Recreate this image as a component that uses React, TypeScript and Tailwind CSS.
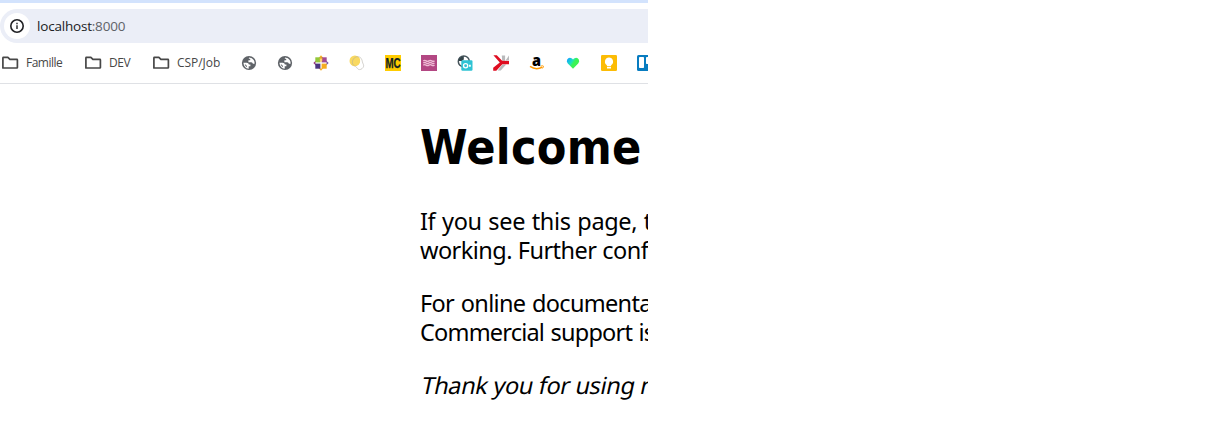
import type { ReactNode } from "react";

const Folder = () => (
  <svg className="block h-4 w-[18px] shrink-0" viewBox="0 0 18 16" fill="none" stroke="#474747" strokeWidth="1.7" strokeLinejoin="round">
    <path d="M1.9 13V2.9q0-.5.5-.5h4.5l2 2h7q.5 0 .5.5v7.6q0 .5-.5.5H2.4q-.5 0-.5-.5Z" />
  </svg>
);

const Icon = ({ children }: { children: ReactNode }) => (
  <svg className="block size-4 shrink-0" viewBox="0 0 16 16">{children}</svg>
);

const Globe = () => (
  <Icon>
    <circle cx="8" cy="8" r="7.1" fill="#5f6368" />
    <path d="M2.4 7.7h3.4q1.9.1 2.1 1.8h1.5v1.7H7.7v2.5Q3 13.3 2.4 7.7" fill="#fff" />
    <path d="M8.2 2.4q3 .1 4.5 2.5 1.1 1.7.9 3.9h-1.7q-.2-1.5-1.7-1.6H7.4V5.3h1.8V3.7H7.7Z" fill="#fff" />
    <path d="M3.7 9.3q1.3.1 2.2 1.7v1.2q-1.7-1-2.2-2.9" fill="#5f6368" />
  </Icon>
);

const Favicons = () => (
  <div className="flex shrink-0 gap-5">
    <Globe />
    <Globe />
    <Icon>
      <path d="m8 .3 2.4 2.7H5.6Z" fill="#f5ad1e" />
      <path d="M.3 8 3 5.6v4.8Z" fill="#9a3380" />
      <path d="M15.7 8 13 5.6v4.8Z" fill="#6f58a8" />
      <path d="M8 15.7 5.6 13h4.8Z" fill="#f5ad1e" />
      <path d="M2.3 2.3h5.3v5.3H2.3Z" fill="#93c83a" />
      <path d="M8.4 2.3h5.3v5.3H8.4Z" fill="#a24c93" />
      <path d="M2.3 8.4h5.3v5.3H2.3Z" fill="#4b3680" />
      <path d="M8.4 8.4h5.3v5.3H8.4Z" fill="#f5ad1e" />
      <path d="M6.7 2.7h2.6V6L8 7.3 6.7 6Z" fill="#f7b933" />
      <path d="M8 4v10M2 8h12" stroke="#fff" strokeWidth=".7" />
    </Icon>
    <Icon>
      <circle cx="5.9" cy="5.9" r="5.4" fill="#f9d960" />
      <path d="M11.2 4.6c1.2.8 1.9 2 2.2 2.2.3 1.8 1.6 3 1.2 4.5-.5 1.8-2.3 3.3-4 3.3-2.5 0-2.2-2.2-4-3.1 3.2-.5 5.3-3.2 4.6-6.9Z" fill="#fff" />
      <path d="M3.3 7.6C3.6 3.5 6.2 1.5 9 1.7c3 .2 4 2.6 4.4 5.1.3 1.8 1.6 3 1.2 4.5-.5 1.8-2.3 3.3-4 3.3-2.5 0-2.2-2.2-4-3.1-1.6-.9-3.4-1.8-3.3-3.9Z" fill="none" stroke="#aaa79e" strokeWidth=".5" />
    </Icon>
    <Icon>
      <path d="M0 0h16v16H0Z" fill="#fc0" />
      <text x=".4" y="13.2" textLength="15.2" lengthAdjust="spacingAndGlyphs" fontFamily="Liberation Sans" fontWeight="700" fontSize="14.5" fill="#132323" stroke="#132323" strokeWidth=".25">MC</text>
    </Icon>
    <Icon>
      <path d="M0 0h16v16H0Z" fill="#b34783" />
      <path d="M2.3 5.9q1.4-1 2.8 0t2.8 0 2.8 0 2.8 0M2.3 8q1.4-1 2.8 0t2.8 0 2.8 0 2.8 0M2.3 10.1q1.4-1 2.8 0t2.8 0 2.8 0 2.8 0" fill="none" stroke="#efbdd6" strokeWidth="1.3" />
    </Icon>
    <Icon>
      <circle cx="6.8" cy="6.4" r="5.5" fill="#fff" stroke="#46545b" strokeWidth="1.5" />
      <path d="M6.8 1v3.5L4.8 6H1.3Q2 2 6.8 1" fill="#34444a" />
      <rect x="4.3" y="5.3" width="11.2" height="10.5" rx="1.2" fill="#2fc3d4" />
      <circle cx="8.6" cy="10.7" r="2.1" fill="none" stroke="#fff" strokeWidth="1.3" />
      <path d="M12 9.7h1.8v2H12Z" fill="#fff" />
    </Icon>
    <Icon>
      <path d="M8.8.4h3.3v5.3H9.2Z M12.6 5.6 16 .4v5.2Z M9.4 9.6h3.8l-3 3.2-2.4 2.7H4.7Z" fill="#b9babc" />
      <path d="M.4.2h3.4l5.3 5.6 6.9.3v3.2H9.3L3.3 15.7H.2v-3L6.8 7.5Z" fill="#df0d21" />
    </Icon>
    <Icon>
      <text x="3" y="10.5" fontFamily="Open Sans" fontWeight="800" fontSize="15.5" textLength="9" lengthAdjust="spacingAndGlyphs" fill="#000">a</text>
      <path d="M1 11.4q6 4.2 12.4.7" fill="none" stroke="#f90" strokeWidth="1.4" />
      <path d="M11.5 11.1q2.9-.8 3 .1t-1.1 2.3" fill="none" stroke="#f90" strokeWidth=".9" />
    </Icon>
    <Icon>
      <defs>
        <linearGradient id="heart" x1="0" x2="1" y1="0" y2=".6">
          <stop offset=".1" stopColor="#12a4ff" />
          <stop offset=".45" stopColor="#1de4b7" />
          <stop offset=".62" stopColor="#3cf354" />
        </linearGradient>
      </defs>
      <path d="M8 13.7 2.8 8.4Q1.1 6.5 2.2 4.5 3.3 2.4 5.7 2.9 7.2 3.2 8 4.4 8.8 3.2 10.3 2.9q2.4-.5 3.5 1.6 1.1 2-.6 3.9Z" fill="url(#heart)" />
    </Icon>
    <Icon>
      <rect width="16" height="16" rx="1.3" fill="#fcbc05" />
      <path d="M8 2.6a4.1 4.1 0 0 0-2.1 7.6v.8h4.2v-.8A4.1 4.1 0 0 0 8 2.6M6 11.8h4v1.6H6Z" fill="#fff" />
    </Icon>
    <Icon>
      <rect width="16" height="16" rx="1.5" fill="#087cc0" />
      <rect x="2" y="2" width="5" height="11" rx=".7" fill="#fff" />
      <rect x="9" y="2" width="5" height="7" rx=".7" fill="#fff" />
    </Icon>
  </div>
);

export default function App() {
  return (
    <div className="h-[439px] w-full overflow-hidden bg-white">
      <div className="h-full w-[648px] overflow-hidden whitespace-nowrap">
        <header className="flex h-[84px] flex-col border-b border-[#dfe1e5] border-t-[3px] border-t-[#d3e3fd] pt-1.5 font-['Open_Sans',sans-serif]">
          <div className="flex h-[34px] shrink-0 items-center rounded-l-full bg-[#ebeef7] pl-1">
            <span className="flex size-[26px] items-center justify-center rounded-full bg-white">
              <svg className="size-4" viewBox="0 0 16 16">
                <circle cx="8" cy="8" r="6.2" fill="none" stroke="#202124" strokeWidth="1.6" />
                <path d="M7.3 7.2h1.4V11H7.3ZM7.3 4.8h1.4v1.4H7.3Z" fill="#202124" />
              </svg>
            </span>
            <span className="ml-[7px] text-[13.5px] leading-5 tracking-[-0.2px] text-[#5f6368]">
              <span className="text-[#202124]">localhost</span>:8000
            </span>
          </div>
          <nav className="flex h-10 items-center text-[12px] leading-4 text-[#474747]">
            <span className="flex w-[83px] shrink-0 items-center gap-[7px] pl-px"><Folder /><span className="tracking-[-0.5px]">Famille</span></span>
            <span className="flex w-[68px] shrink-0 items-center gap-[7px] pl-px"><Folder /><span className="tracking-[-0.45px]">DEV</span></span>
            <span className="flex w-[90px] shrink-0 items-center gap-[7px] pl-px"><Folder /><span className="tracking-[-0.05px]">CSP/Job</span></span>
            <Favicons />
          </nav>
        </header>
        <main className="pl-[420px] font-['Noto_Sans',sans-serif] text-[23.5px] leading-[29px] text-black">
          <h1 className="pt-[34px] font-['DejaVu_Sans_Condensed','DejaVu_Sans',sans-serif] text-[48px] leading-[58px] font-bold tracking-[0.3px]">Welcome</h1>
          <p className="mt-[31px]">
            <span className="block tracking-[-0.35px] [word-spacing:0.9px]">If you see this page, t</span>
            <span className="block tracking-[-0.55px] [word-spacing:0.4px]">working. Further conf</span>
          </p>
          <p className="mt-6">
            <span className="block tracking-[-0.7px] [word-spacing:1.4px]">For online documenta</span>
            <span className="block tracking-[-0.8px] [word-spacing:1.2px]">Commercial support is</span>
          </p>
          <p className="mt-6 pl-0.5">
            <em className="inline-block -skew-x-12 not-italic tracking-[-0.35px]">Thank you for using n</em>
          </p>
        </main>
      </div>
    </div>
  );
}
